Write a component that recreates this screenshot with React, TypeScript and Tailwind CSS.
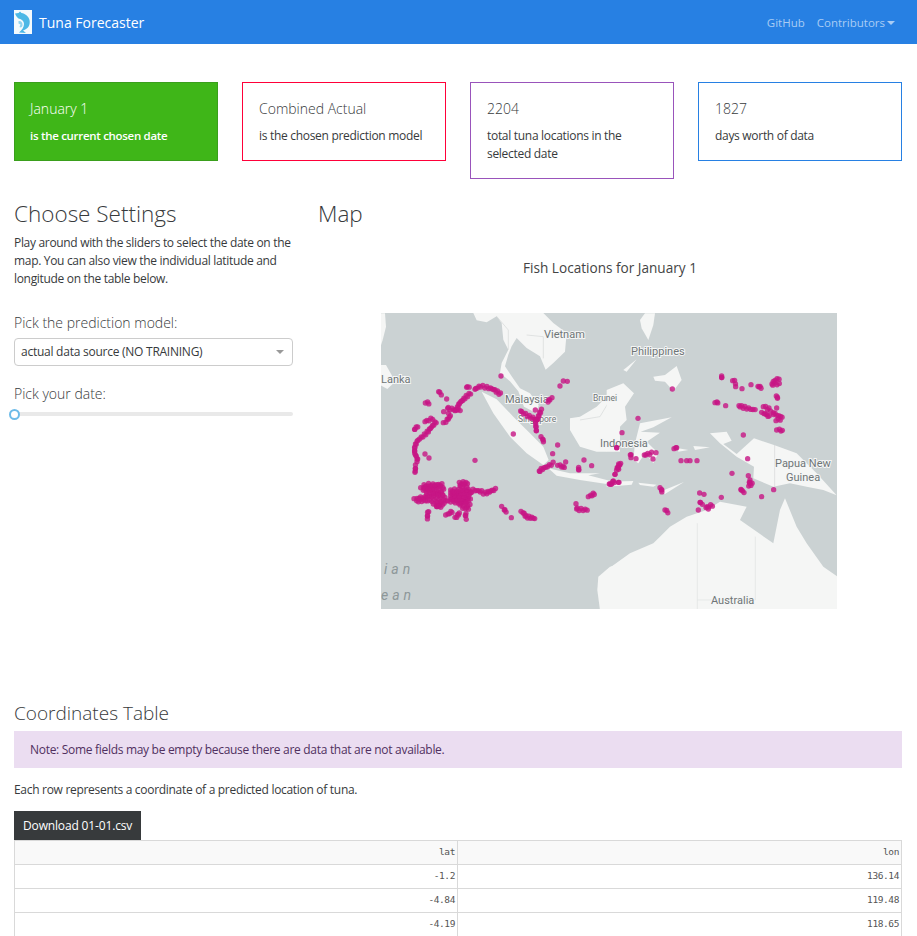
import React from 'react';

type Pt = [number, number];

// tracks of dots in 3x crop coordinates, one group for each half of the map
const westTracks: Pt[][] = [
  [[105, 487], [103, 468]],
  [[111, 455], [105, 430], [108, 410], [115, 390], [130, 375], [150, 355], [172, 335]],
  [[104, 358], [115, 350]],
  [[135, 335], [155, 325]],
  [[190, 338], [211, 318]],
  [[191, 305]],
  [[205, 310]],
  [[203, 295], [240, 300]],
  [[225, 302], [235, 280], [275, 250]],
  [[285, 238], [300, 228], [340, 238], [365, 252]],
  [[260, 232], [270, 231]],
  [[176, 245], [183, 252]],
  [[200, 267]],
  [[136, 279], [143, 279]],
  [[135, 432]],
  [[147, 444]],
  [[285, 451]],
  [[363, 198]],
  [[550, 213]],
  [[562, 214]],
  [[540, 228]],
  [[516, 263], [507, 275]],
  [[422, 303], [445, 320], [470, 330], [488, 300]],
  [[470, 330], [467, 365]],
  [[466, 300]],
  [[483, 380], [488, 396]],
  [[400, 372]],
  [[533, 405]],
  [[518, 431]],
  [[478, 483], [500, 472], [518, 460]],
  [[533, 466], [550, 472]],
  [[557, 456]],
  [[596, 472], [597, 482]],
  [[612, 450]],
  [[635, 467]],
  [[710, 413]],
  [[705, 493]],
  [[716, 478], [720, 462]],
  [[688, 522], [700, 515]],
  [[715, 517]],
  // left block
  [[122, 533], [190, 530]],
  [[132, 524], [185, 524]],
  [[130, 541], [190, 541]],
  [[140, 551], [190, 551]],
  [[135, 560], [192, 560]],
  [[102, 566], [125, 562]],
  [[110, 572], [200, 572]],
  [[160, 582], [195, 582]],
  [[170, 590], [185, 590]],
  // right block
  [[212, 540], [268, 540]],
  [[212, 549], [268, 549]],
  [[212, 558], [268, 558]],
  [[212, 567], [268, 567]],
  [[212, 576], [268, 576]],
  [[240, 585], [268, 585]],
  [[248, 595], [262, 595]],
  [[238, 517], [265, 520]],
  [[240, 527], [262, 527]],
  [[272, 548], [278, 540], [302, 545]],
  [[310, 552], [330, 545], [350, 538]],
  [[146, 605], [141, 625]],
  [[197, 615], [213, 604]],
  [[225, 622], [240, 610]],
  [[258, 610], [262, 625]],
  [[365, 589]],
  [[373, 600], [378, 604]],
  [[394, 623]],
  [[423, 604], [435, 620], [467, 625]],
  [[588, 581]],
  [[590, 597], [620, 600]],
  [[625, 560], [640, 550]],
];

const eastTracks: Pt[][] = [
  [[335, 198], [333, 205]],
  [[368, 212], [373, 218]],
  [[377, 230]],
  [[396, 236]],
  [[423, 224]],
  [[444, 229], [456, 232]],
  [[486, 222], [510, 222]],
  [[490, 214], [505, 205]],
  [[499, 258], [499, 265]],
  [[315, 278], [322, 278]],
  [[347, 287]],
  [[387, 287], [435, 300]],
  [[460, 290], [478, 300]],
  [[455, 307], [480, 320]],
  [[500, 294]],
  [[490, 308], [512, 320]],
  [[498, 332], [513, 325]],
  [[500, 360], [515, 362]],
  [[400, 375]],
  [[187, 237]],
  [[84, 325]],
  [[36, 368]],
  [[20, 413]],
  [[63, 434], [66, 441]],
  [[78, 446]],
  [[103, 435], [122, 430]],
  [[138, 428]],
  [[129, 447]],
  [[192, 416], [198, 413]],
  [[213, 452]],
  [[230, 452]],
  [[240, 452]],
  [[261, 452]],
  [[32, 460], [22, 480]],
  [[15, 493]],
  [[0, 522], [8, 516]],
  [[27, 517]],
  [[150, 533], [153, 545]],
  [[165, 600], [174, 606]],
  [[269, 549]],
  [[282, 553]],
  [[334, 562]],
  [[270, 577], [280, 582]],
  [[288, 593], [305, 585]],
  [[295, 597]],
  [[265, 600]],
  [[413, 446]],
  [[366, 490]],
  [[415, 497]],
  [[420, 510], [418, 525], [430, 522]],
  [[393, 538], [403, 546]],
  [[455, 560]],
  [[491, 539]],
];

const westLand = [
  '0,10 15,10 18,50 8,90 0,115',
  '0,165 18,165 35,195 42,218 22,237 0,225',
  '280,9 290,31 320,37 350,19 365,39 370,89 385,119 365,159 360,189 390,214 415,244 432,290 470,310 476,285 450,250 420,235 395,199 375,169 385,134 395,109 410,84 440,114 480,139 497,179 520,159 555,125 560,69 520,39 490,9',
  '305,245 350,268 400,320 450,370 490,410 506,450 490,465 440,430 390,380 340,310',
  '505,475 570,490 660,490 625,496 700,515 680,522 600,510 530,497',
  '570,325 600,320 650,290 690,250 720,225 720,425 650,425 600,410 570,360',
  '655,800 690,770 720,762 720,900 660,900 652,840',
];

const eastLand = [
  '90,30 105,10 135,10 130,45 115,90 95,55',
  '130,200 165,195 200,168 215,210 190,243 165,215 135,212',
  '40,180 80,148 50,185',
  '-10,240 40,220 72,250 45,290 50,330 30,350 10,400 -10,425',
  '90,340 185,322 130,352 92,365 150,368 110,395 145,430 130,460 105,430 85,460 70,450 75,400',
  '-10,515 70,513 65,524 -10,530',
  '85,518 140,524 130,530 90,525',
  '150,545 222,516 165,552',
  '250,408 300,412 255,420',
  '205,415 235,420 205,425',
  '300,370 350,365 365,392 340,402 380,432 432,385 492,405 560,430 620,490 680,556 640,540 590,530 540,520 490,530 430,505 432,470 380,440 330,400',
  '-10,780 60,730 130,700 150,680 180,650 230,620 290,600 330,575 410,590 390,630 490,700 510,600 525,565 560,650 590,700 640,770 690,805 690,900 -10,900',
];

const expand = (tracks: Pt[][]) => {
  const dots: Pt[] = [];
  tracks.forEach((track) => {
    dots.push(track[0]);
    for (let i = 1; i < track.length; i++) {
      const [ax, ay] = track[i - 1];
      const [bx, by] = track[i];
      const steps = Math.ceil(Math.hypot(bx - ax, by - ay) / 6);
      for (let s = 1; s <= steps; s++) {
        // small fixed scatter so a track doesn't read as a drawn line
        const n = dots.length;
        dots.push([
          ax + ((bx - ax) * s) / steps + Math.sin(n * 12.9) * 3.5,
          ay + ((by - ay) * s) / steps + Math.sin(n * 78.2) * 3.5,
        ]);
      }
    }
  });
  return dots;
};

const Dots = ({ tracks }: { tracks: Pt[][] }) => (
  <g fill="#c71585" fillOpacity="0.8">
    {expand(tracks).map(([x, y], i) => (
      <circle key={i} cx={x} cy={y} r="8" />
    ))}
  </g>
);

const labelClass = 'fill-[#6f7577] stroke-[#f4f5f5] [paint-order:stroke] [stroke-width:2px] font-["Roboto",sans-serif]';

const MapLabel = ({ x, y, size, children }: { x: number; y: number; size: number; children: string }) => (
  <text x={x} y={y} fontSize={size} className={labelClass}>
    {children}
  </text>
);

const FishMap = () => (
  <svg viewBox="0 0 456 296" className="block w-[456px] h-[296px]">
    <rect width="456" height="296" fill="#cbd2d3" />
    <g transform="translate(-1,-3) scale(0.3333)">
      {westLand.map((p) => (
        <polygon key={p} points={p} fill="#f5f6f5" />
      ))}
      <polyline points="350,19 385,60 385,119" fill="none" stroke="#d5d8d8" strokeWidth="2" />
      <polyline points="440,75 490,80 490,145" fill="none" stroke="#d5d8d8" strokeWidth="2" />
      <polyline points="600,330 660,320 690,270" fill="none" stroke="#d5d8d8" strokeWidth="2" />
    </g>
    <g transform="translate(229,-3) scale(0.3333)">
      {eastLand.map((p) => (
        <polygon key={p} points={p} fill="#f5f6f5" />
      ))}
      <polyline points="262,640 262,900" fill="none" stroke="#dfe1e1" strokeWidth="2" />
      <polyline points="436,680 436,870 262,870" fill="none" stroke="#dfe1e1" strokeWidth="2" />
      <polyline points="494,405 494,530" fill="none" stroke="#d5d8d8" strokeWidth="2" />
    </g>
    <MapLabel x={163} y={25} size={11}>Vietnam</MapLabel>
    <MapLabel x={250} y={42} size={11}>Philippines</MapLabel>
    <MapLabel x={0} y={70} size={11}>Lanka</MapLabel>
    <MapLabel x={124} y={90} size={11}>Malaysia</MapLabel>
    <MapLabel x={212} y={88} size={8.5}>Brunei</MapLabel>
    <MapLabel x={137} y={109} size={8.5}>Singapore</MapLabel>
    <MapLabel x={219} y={134} size={11}>Indonesia</MapLabel>
    <MapLabel x={394} y={154} size={11}>Papua New</MapLabel>
    <MapLabel x={405} y={168} size={11}>Guinea</MapLabel>
    <MapLabel x={330} y={291} size={11}>Australia</MapLabel>
    <text x="3" y="261" fontSize="14" fontStyle="italic" letterSpacing="4" fill="#8d9799" className='font-["Roboto",sans-serif]'>ian</text>
    <text x="0" y="287" fontSize="14" fontStyle="italic" letterSpacing="4" fill="#8d9799" className='font-["Roboto",sans-serif]'>ean</text>
    <g transform="translate(-1,-3) scale(0.3333)">
      <Dots tracks={westTracks} />
    </g>
    <g transform="translate(229,-3) scale(0.3333)">
      <Dots tracks={eastTracks} />
    </g>
  </svg>
);

const Logo = () => (
  <svg viewBox="0 0 18 24" className="w-[18px] h-6 block">
    <rect width="18" height="24" fill="#f4fafd" />
    <path d="M1 3.5 L4.5 3 L6 1.5 L7.5 3 C11 3.5 14.5 6 15.5 10 C16.5 14.5 14.5 19 9 20.5 L12 23 L5 22.5 C8 20 10 17 10 14 C10 11 8 9.5 4.5 8.5 C3 7.5 1.5 5 1 3.5 Z" fill="#4cb8e6" />
    <path d="M4.5 11 C7 10.5 9 12.5 8.5 15.5 C8 17.5 6.5 18 5.5 17 L6.5 14.5 L4.5 13.5 Z" fill="#8fd4f0" />
  </svg>
);

const StatCard = ({ title, text, border }: { title: string; text: string; border: string }) => (
  <div className={`border ${border} px-4 pt-4 pb-[15px]`}>
    <h6 className="text-[14px] leading-[20px] font-light mb-[8px]">{title}</h6>
    <p className="text-[12px] leading-[18px] tracking-[-0.3px]">{text}</p>
  </div>
);

const rows = [
  ['-1.2', '136.14'],
  ['-4.84', '119.48'],
  ['-4.19', '118.65'],
];

const App = () => {
  return (
    <div className='h-[936px] overflow-hidden bg-white text-[#373a3c] font-["Open_Sans",sans-serif]'>
      {/* Navbar */}
      <nav className="h-11 bg-[#2780e3] flex items-center pl-[14px] pr-[22px]">
        <Logo />
        <span className="ml-[7px] text-white text-[14px]">Tuna Forecaster</span>
        <div className="ml-auto flex items-center gap-[12px] text-[11.5px] text-[#a9ccf4] pt-[1px]">
          <span>GitHub</span>
          <span className="flex items-center gap-[2px]">
            Contributors
            <span className="w-0 h-0 border-x-[4px] border-x-transparent border-t-[4px] border-t-[#a9ccf4]" />
          </span>
        </div>
      </nav>

      <div className="pl-[14px] pr-[15px] pt-[38px]">
        {/* Stat cards */}
        <div className="grid grid-cols-[204px_204px_204px_204px] gap-x-6 items-start">
          <div className="border border-[#3a9f1c] bg-[#3fb618] text-white px-[15px] pt-4 pb-[15px]">
            <h6 className="text-[14px] leading-[20px] font-light mb-[8px]">January 1</h6>
            <p className="text-[11.5px] leading-[18px] font-semibold tracking-[-0.3px]">is the current chosen date</p>
          </div>
          <StatCard title="Combined Actual" text="is the chosen prediction model" border="border-[#ff0039]" />
          <StatCard title="2204" text="total tuna locations in the selected date" border="border-[#9954bb]" />
          <StatCard title="1827" text="days worth of data" border="border-[#2780e3]" />
        </div>

        {/* Settings and map */}
        <div className="flex mt-[21px]">
          <div className="w-[279px] shrink-0">
            <h4 className="text-[22.5px] leading-[28px] font-light">Choose Settings</h4>
            <p className="mt-[6px] text-[12px] leading-[18px] tracking-[-0.32px]">
              Play around with the sliders to select the date on the map. You can also view the individual latitude and longitude on the table below.
            </p>
            <p className="mt-[24px] text-[14px] leading-[21px] font-light">Pick the prediction model:</p>
            <div className="mt-[5px] h-[28px] border border-[#cccccc] rounded-[4px] flex items-center pl-[6px] pr-[8px] text-[12px] tracking-[-0.25px]">
              actual data source (NO TRAINING)
              <span className="ml-auto w-0 h-0 border-x-[4px] border-x-transparent border-t-[4px] border-t-[#999999]" />
            </div>
            <p className="mt-[17px] text-[14px] leading-[21px] font-light">Pick your date:</p>
            <div className="relative mt-[8px] h-[4px] bg-[#e9e9e9] rounded">
              <span className="absolute left-[-5px] top-[-3.5px] w-[11px] h-[11px] rounded-full bg-white border-2 border-[#6dbbe8]" />
            </div>
          </div>
          <div className="ml-[25px] flex-1">
            <h4 className="text-[22.5px] leading-[28px] font-light">Map</h4>
            <p className="mt-[30px] text-center text-[13.6px] leading-[20px] text-[#444444]">Fish Locations for January 1</p>
            <div className="mt-[35px] ml-[63px]">
              <FishMap />
            </div>
          </div>
        </div>

        {/* Coordinates table */}
        <h4 className="mt-[91px] text-[19px] leading-[26px] font-light">Coordinates Table</h4>
        <div className="mt-[5px] h-[37px] bg-[#ebddf1] flex items-center px-4 text-[12px] tracking-[-0.3px] text-[#50305f]">
          Note: Some fields may be empty because there are data that are not available.
        </div>
        <p className="mt-[13px] text-[12px] leading-[18px] tracking-[-0.3px]">Each row represents a coordinate of a predicted location of tuna.</p>
        <button className="block mt-[12px] h-[29px] px-[9px] pt-[1px] bg-[#373a3c] text-white text-[12px] tracking-[-0.15px]">Download 01-01.csv</button>
        <table className='w-[888px] table-fixed border-collapse font-["DejaVu_Sans_Mono",monospace] text-[9.5px] tracking-[-0.4px] text-[#555555]'>
          <thead>
            <tr className="h-6 bg-[#f9f9f9]">
              <th className="w-[443px] border border-[#d9d9d9] px-[2px] text-right font-normal">lat</th>
              <th className="border border-[#d9d9d9] px-[2px] text-right font-normal">lon</th>
            </tr>
          </thead>
          <tbody>
            {rows.map(([lat, lon]) => (
              <tr key={lat} className="h-6">
                <td className="border border-[#d9d9d9] px-[2px] text-right">{lat}</td>
                <td className="border border-[#d9d9d9] px-[2px] text-right">{lon}</td>
              </tr>
            ))}
          </tbody>
        </table>
      </div>
    </div>
  );
};

export default App;
